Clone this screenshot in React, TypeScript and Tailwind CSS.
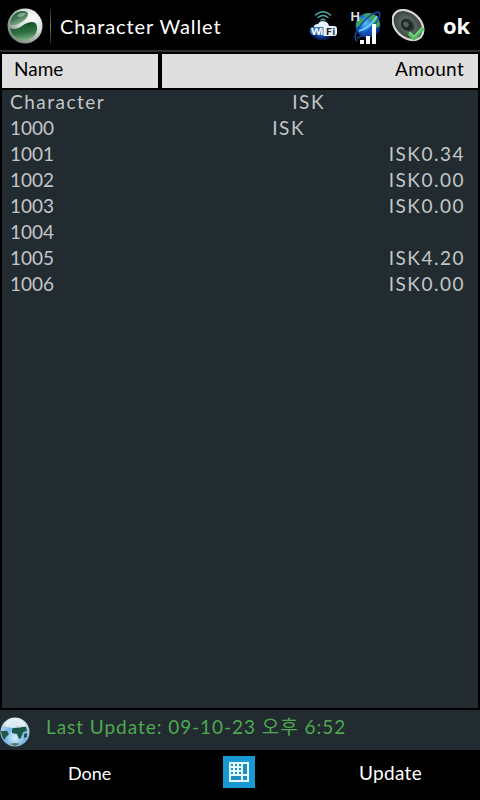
import clsx from "clsx";

type Row = {
  name: string;
  amount: string;
  nameClass?: string;
  amountClass?: string;
};

const rows: Row[] = [
  {
    name: "Character",
    amount: "ISK",
    nameClass: "tracking-[1.5px]",
    amountClass: "mr-[140px]",
  },
  { name: "1000", amount: "ISK", amountClass: "mr-[160px]" },
  { name: "1001", amount: "ISK0.34" },
  { name: "1002", amount: "ISK0.00" },
  { name: "1003", amount: "ISK0.00" },
  { name: "1004", amount: "" },
  { name: "1005", amount: "ISK4.20" },
  { name: "1006", amount: "ISK0.00" },
];

const StartIcon = () => (
  <svg width="36" height="36" viewBox="0 0 36 36">
    <defs>
      <radialGradient id="ball" cx="0.7" cy="0.3" r="0.8">
        <stop offset="0" stopColor="#ffffff" />
        <stop offset="0.5" stopColor="#d3dbd5" />
        <stop offset="1" stopColor="#6f8275" />
      </radialGradient>
      <linearGradient id="liquidTop" x1="0" y1="0" x2="0.6" y2="1">
        <stop offset="0" stopColor="#174d2b" />
        <stop offset="0.5" stopColor="#3d7350" />
        <stop offset="1" stopColor="#9abb9f" />
      </linearGradient>
      <linearGradient id="liquid" x1="0.3" y1="0" x2="0.5" y2="1">
        <stop offset="0" stopColor="#124a26" />
        <stop offset="0.6" stopColor="#2f7142" />
        <stop offset="1" stopColor="#76aa7d" />
      </linearGradient>
    </defs>
    <circle cx="18" cy="18" r="17.500" fill="url(#ball)" />
    <path
      d="M3 14C5 7 10 2.500 16 3C21 3 22 6 20 9C17 14 9 18 5 17C3 17 3 16 3 14Z"
      fill="url(#liquidTop)"
    />
    <path
      d="M3 20C6 22 11 21 15 18C19 15 22 14 25 14C30 14 31 19 29.500 24C27 30 21 32.500 15 32C8 31 4 26 3 20Z"
      fill="url(#liquid)"
    />
    <path d="M10 8C12 5 15 4 19 5C17 9 13 10 10 8Z" fill="#9bc09f" opacity="0.7" />
  </svg>
);

const WifiIcon = () => (
  <svg width="30" height="30" viewBox="0 0 30 30">
    <defs>
      <radialGradient id="wifiGlow" cx="0.45" cy="0.55" r="0.5">
        <stop offset="0" stopColor="#4aa2ef" />
        <stop offset="0.5" stopColor="#123f94" />
        <stop offset="1" stopColor="#020618" />
      </radialGradient>
    </defs>
    <ellipse cx="13.500" cy="20" rx="12.500" ry="9.500" fill="url(#wifiGlow)" />
    <g fill="none" stroke="#4faaa9" strokeWidth="1.500" strokeLinecap="round">
      <path d="M6.500 4Q14 -2.500 21.500 4" />
      <path d="M9 6.500Q14 2.500 19 6.500" />
      <path d="M12 9Q14 7.500 16 9" />
    </g>
    <path
      d="M5 15Q6 13 9 13Q11 9 16 10.500Q19 11 20 15H25Q28 15 28 18V22Q28 25 25 25H15L13 23H14V16H5Z"
      fill="#e8f4fb"
    />
    <path d="M3 16H14.500V24H5Q0 23 1 19Q1 17 3 16Z" fill="#3677b9" />
    <text
      x="2"
      y="23.500"
      fill="#fff"
      fontSize="10"
      fontWeight="900"
      fontFamily="Lato, sans-serif"
      textLength="12"
    >
      Wi
    </text>
    <text
      x="17"
      y="23.500"
      fill="#18222b"
      fontSize="10"
      fontWeight="900"
      fontFamily="Lato, sans-serif"
      textLength="9"
    >
      Fi
    </text>
  </svg>
);

const NetworkIcon = () => (
  <svg width="34" height="38" viewBox="0 0 34 38">
    <defs>
      <radialGradient id="netGlobe" cx="0.4" cy="0.4" r="0.65">
        <stop offset="0" stopColor="#59c1f4" />
        <stop offset="0.5" stopColor="#1767cd" />
        <stop offset="1" stopColor="#072472" />
      </radialGradient>
    </defs>
    <circle cx="18" cy="18.500" r="12.500" fill="url(#netGlobe)" />
    <path
      d="M14 7Q24 4 29 12L30 19L26 21L23 16L20 12L15 10ZM7 14L12 11L15 14L10 19L6 20Z"
      fill="#40a650"
    />
    <path
      d="M7 34C-1 28 19 5 29 5C33 10 19 27 7 31"
      fill="none"
      stroke="#164da8"
      strokeWidth="1.500"
    />
    <path d="M9 24Q20 21 27 9" fill="none" stroke="#78d5ff" strokeWidth="1.500" />
    <text
      x="0.500"
      y="14"
      fill="#ddd"
      fontSize="13"
      fontWeight="700"
      fontFamily="Liberation Sans, sans-serif"
    >
      H
    </text>
    <path d="M10 33h4v4h-4zM16 29h4v8h-4zM22 17h4v20h-4z" fill="#fff" />
  </svg>
);

const SpeakerIcon = () => (
  <svg width="34" height="34" viewBox="0 0 34 34">
    <defs>
      <radialGradient id="cone">
        <stop offset="0" stopColor="#191f1d" />
        <stop offset="0.35" stopColor="#303b38" />
        <stop offset="0.5" stopColor="#56645e" />
        <stop offset="1" stopColor="#34403b" />
      </radialGradient>
    </defs>
    <path d="M3 20L7 27L12 27L14 30L23 31L19 22Z" fill="#4b4b4b" />
    <g transform="rotate(43 16 16)">
      <ellipse
        cx="16"
        cy="16"
        rx="17.500"
        ry="12.500"
        fill="url(#cone)"
        stroke="#d7d3d2"
        strokeWidth="2.200"
      />
      <ellipse cx="15" cy="17" rx="6" ry="5" fill="#202726" />
      <ellipse cx="14" cy="17" rx="3" ry="2.500" fill="#53605c" />
    </g>
    <path d="M17 24L22 29L31 19" fill="none" stroke="#53bd61" strokeWidth="4" />
    <path d="M17 23L22 27.500L30.500 18" fill="none" stroke="#91e49a" />
  </svg>
);

const GlobeIcon = () => (
  <svg width="30" height="30" viewBox="0 0 30 30">
    <defs>
      <radialGradient id="globe" cx="0.5" cy="0.7" r="0.7">
        <stop offset="0" stopColor="#d7efff" />
        <stop offset="0.5" stopColor="#76b4e4" />
        <stop offset="1" stopColor="#d5e5ec" />
      </radialGradient>
    </defs>
    <circle cx="15" cy="15" r="14.500" fill="url(#globe)" />
    <path
      d="M1 14L7 14L9 17L6 20L4 23L2 19ZM12 12L17 9L26 10L27 14L23 15L21 21L19 22L17 17L12 16ZM24 17L27 16L27 20L24 21Z"
      fill="#1d5747"
    />
    <path d="M4 9Q7 1 15 1Q23 1 26 9Q15 13 4 9Z" fill="#eef5f4" opacity="0.8" />
    <path d="M10 27Q15 25 20 27L15 29Z" fill="#577b67" />
  </svg>
);

const KeyboardIcon = () => (
  <svg width="32" height="32" viewBox="0 0 32 32">
    <path d="M0 0h32v32H0z" fill="#1798d1" />
    <path d="M6 6h20v20H6z" fill="#e2faff" />
    <path
      d="M8 8h2v2H8zM12 8h2v2h-2zM16 8h2v2h-2zM8 12h2v2H8zM12 12h2v2h-2zM16 12h2v2h-2zM8 16h2v2H8zM12 16h2v2h-2zM16 16h2v2h-2zM8 20h10v4H8zM20 8h4v10h-4zM20 20h4v4h-4z"
      fill="#218eb9"
    />
  </svg>
);

export default function App() {
  return (
    <div className="flex h-[800px] w-[480px] flex-col overflow-hidden bg-black font-[Lato,'Noto_Sans_CJK_KR',sans-serif] text-[19px] whitespace-nowrap">
      <header className="flex h-[52px] shrink-0 items-center border-b-2 border-[#303030] pt-px pl-[7px] text-white">
        <StartIcon />
        <div className="ml-[7px] h-9 w-px bg-linear-to-b from-[#222] via-[#777] to-[#222]" />
        <h1 className="ml-[9px] w-[249px] text-[20px] tracking-[0.9px]">
          Character Wallet
        </h1>
        <WifiIcon />
        <div className="ml-[11px]">
          <NetworkIcon />
        </div>
        <div className="ml-[8px]">
          <SpeakerIcon />
        </div>
        <span className="ml-[17px] font-['Open_Sans',sans-serif] text-[22px] font-bold">
          ok
        </span>
      </header>

      <div className="mx-[2px] mt-[2px] flex h-[34px] shrink-0 gap-1 leading-[30px] text-black">
        <div className="w-[156px] bg-[#dedede] pl-3">Name</div>
        <div className="flex-1 bg-[#dedede] pr-[14px] text-right tracking-[0.3px]">
          Amount
        </div>
      </div>

      <main className="mx-[2px] mt-[2px] h-[618px] shrink-0 bg-[#222c30] text-[#c3c6c8]">
        {rows.map((row) => (
          <div
            key={row.name}
            className="flex h-[26px] justify-between pr-[13px] pl-2 leading-[23px]"
          >
            <span className={row.nameClass}>{row.name}</span>
            <span className={clsx("tracking-[1.5px]", row.amountClass)}>
              {row.amount}
            </span>
          </div>
        ))}
      </main>

      <div className="mt-[2px] flex h-10 shrink-0 bg-[#222c30] text-[#4ea852]">
        <div className="mt-[7px]">
          <GlobeIcon />
        </div>
        <span className="ml-4 leading-[33px] tracking-[0.95px]">
          Last Update: 09-10-23 오후 6:52
        </span>
      </div>

      <footer className="grid h-[46px] shrink-0 grid-cols-[1fr_32px_1fr] items-center text-white">
        <span className="pl-[68px] text-[18px]">Done</span>
        <div className="-mt-[2px] -ml-[1px]">
          <KeyboardIcon />
        </div>
        <span className="pr-[58px] text-right tracking-[0.3px]">Update</span>
      </footer>
    </div>
  );
}
